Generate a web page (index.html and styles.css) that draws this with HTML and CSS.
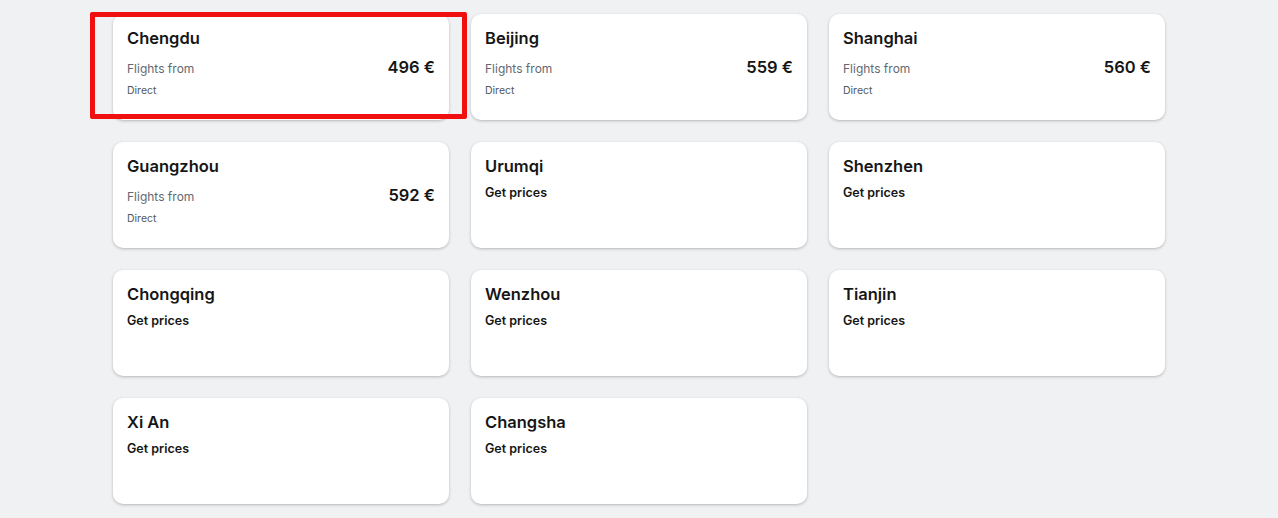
FILE: index.html
```html
<!DOCTYPE html>
<html lang="en">
<head>
<meta charset="utf-8">
<title>Flights to China</title>
<link rel="stylesheet" href="styles.css">
</head>
<body>
<main class="grid">
  <a class="card">
    <div class="city">Chengdu</div>
    <div class="row"><span class="from">Flights from</span><span class="price">496 €</span></div>
    <div class="direct">Direct</div>
    <span class="highlight"></span>
  </a>
  <a class="card">
    <div class="city">Beijing</div>
    <div class="row"><span class="from">Flights from</span><span class="price">559 €</span></div>
    <div class="direct">Direct</div>
  </a>
  <a class="card">
    <div class="city">Shanghai</div>
    <div class="row"><span class="from">Flights from</span><span class="price">560 €</span></div>
    <div class="direct">Direct</div>
  </a>
  <a class="card">
    <div class="city">Guangzhou</div>
    <div class="row"><span class="from">Flights from</span><span class="price">592 €</span></div>
    <div class="direct">Direct</div>
  </a>
  <a class="card">
    <div class="city">Urumqi</div>
    <div class="get">Get prices</div>
  </a>
  <a class="card">
    <div class="city">Shenzhen</div>
    <div class="get">Get prices</div>
  </a>
  <a class="card">
    <div class="city">Chongqing</div>
    <div class="get">Get prices</div>
  </a>
  <a class="card">
    <div class="city">Wenzhou</div>
    <div class="get">Get prices</div>
  </a>
  <a class="card">
    <div class="city">Tianjin</div>
    <div class="get">Get prices</div>
  </a>
  <a class="card">
    <div class="city">Xi An</div>
    <div class="get">Get prices</div>
  </a>
  <a class="card">
    <div class="city">Changsha</div>
    <div class="get">Get prices</div>
  </a>
</main>
</body>
</html>
```
FILE: styles.css
```css
html, body {
  margin: 0;
  padding: 0;
  background: #eff1f2;
  height: 100%;
}
body {
  font-family: Inter, "Noto Sans", "Liberation Sans", sans-serif;
  color: #161616;
}
.grid {
  display: grid;
  grid-template-columns: repeat(3, 336px);
  grid-auto-rows: 106px;
  gap: 22px;
  justify-content: center;
  padding-top: 14px;
}
.card {
  position: relative;
  display: block;
  background: #ffffff;
  border-radius: 10px;
  box-shadow: 0 1px 3px rgba(37, 32, 31, 0.28);
  padding: 13px 14px 0 14px;
  box-sizing: border-box;
  text-decoration: none;
  color: inherit;
}
.city {
  font-size: 16.5px;
  line-height: 22px;
  font-weight: 600;
}
.row {
  display: flex;
  justify-content: space-between;
  align-items: baseline;
  margin-top: 8px;
}
.from {
  font-size: 12px;
  color: #626971;
}
.price {
  font-size: 16.5px;
  line-height: 21px;
  font-weight: 600;
}
.direct {
  margin-top: 6px;
  font-size: 10.5px;
  line-height: 14px;
  color: #545860;
}
.get {
  margin-top: 7px;
  font-size: 12.5px;
  line-height: 18px;
  font-weight: 600;
}
.highlight {
  position: absolute;
  left: -23px;
  top: -2px;
  right: -18px;
  bottom: 1px;
  border: 5px solid #f01010;
  border-radius: 2px;
  pointer-events: none;
}
```
